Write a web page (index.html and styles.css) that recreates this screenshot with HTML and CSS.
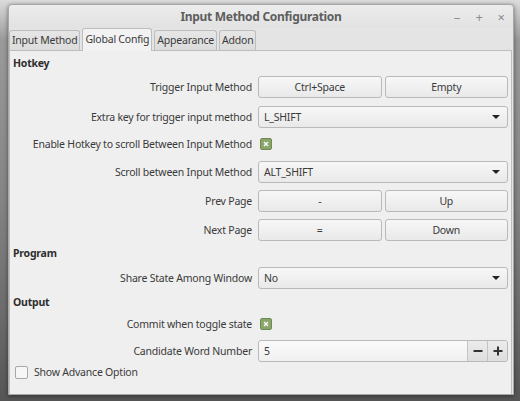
FILE: index.html
```html
<!DOCTYPE html>
<html>
<head>
<meta charset="utf-8">
<link rel="stylesheet" href="styles.css">
</head>
<body>
<div class="desk">
  <div class="window">
    <div class="titlebar">
      <div class="title">Input Method Configuration</div>
      <div class="wbtns">
        <span class="wb">&#8211;</span>
        <span class="wb">+</span>
        <span class="wb">&#215;</span>
      </div>
    </div>
    <div class="tabs">
      <div class="tab">Input Method</div>
      <div class="tab active">Global Config</div>
      <div class="tab">Appearance</div>
      <div class="tab">Addon</div>
    </div>
    <div class="panel">
      <div class="sect s-first">Hotkey</div>
      <div class="row r1">
        <div class="lbl">Trigger Input Method</div>
        <div class="ctl pair"><div class="btn">Ctrl+Space</div><div class="btn">Empty</div></div>
      </div>
      <div class="row r2">
        <div class="lbl">Extra key for trigger input method</div>
        <div class="ctl"><div class="combo"><span>L_SHIFT</span><span class="arrow"></span></div></div>
      </div>
      <div class="row chk r3">
        <div class="lbl">Enable Hotkey to scroll Between Input Method</div>
        <div class="ctl"><span class="cb on"><svg viewBox="0 0 6 6" width="6" height="6"><path d="M1 1L5 5M5 1L1 5" stroke="#fff" stroke-width="1.3"/></svg></span></div>
      </div>
      <div class="row r4">
        <div class="lbl">Scroll between Input Method</div>
        <div class="ctl"><div class="combo"><span>ALT_SHIFT</span><span class="arrow"></span></div></div>
      </div>
      <div class="row r5">
        <div class="lbl">Prev Page</div>
        <div class="ctl pair"><div class="btn">-</div><div class="btn">Up</div></div>
      </div>
      <div class="row r6">
        <div class="lbl">Next Page</div>
        <div class="ctl pair"><div class="btn">=</div><div class="btn">Down</div></div>
      </div>
      <div class="sect s-prog">Program</div>
      <div class="row r7">
        <div class="lbl">Share State Among Window</div>
        <div class="ctl"><div class="combo"><span>No</span><span class="arrow"></span></div></div>
      </div>
      <div class="sect s-out">Output</div>
      <div class="row chk r8">
        <div class="lbl">Commit when toggle state</div>
        <div class="ctl"><span class="cb on"><svg viewBox="0 0 6 6" width="6" height="6"><path d="M1 1L5 5M5 1L1 5" stroke="#fff" stroke-width="1.3"/></svg></span></div>
      </div>
      <div class="row r9">
        <div class="lbl">Candidate Word Number</div>
        <div class="ctl">
          <div class="spin">
            <span class="val">5</span>
            <span class="sb"><svg viewBox="0 0 10 10" width="10" height="10"><path d="M0.5 5H9.5" stroke="#333" stroke-width="2"/></svg></span>
            <span class="sb"><svg viewBox="0 0 10 10" width="10" height="10"><path d="M0.5 5H9.5M5 0.5V9.5" stroke="#333" stroke-width="2"/></svg></span>
          </div>
        </div>
      </div>
      <div class="adv">
        <span class="cb off"></span>
        <span>Show Advance Option</span>
      </div>
    </div>
  </div>
</div>
</body>
</html>
```
FILE: styles.css
```css
html, body {
  margin: 0;
  padding: 0;
}
body {
  width: 520px;
  height: 401px;
  overflow: hidden;
  background: linear-gradient(180deg, #dcdcdc 0px, #9a9a9a 40px, #848484 200px, #6a6a6a 320px, #555 401px);
  font-family: "Noto Sans", "DejaVu Sans", sans-serif;
  font-size: 10.5px;
  letter-spacing: -0.22px;
  color: #3a3a3a;
}
.desk {
  padding: 4px 6px 6px 8px;
}
.window {
  width: 504px;
  height: 389px;
  border: 1px solid #a8a8a8;
  border-radius: 4px 4px 0 0;
  background: #e4e4e4;
  box-shadow: 0 1px 4px rgba(0,0,0,0.45);
  display: flex;
  flex-direction: column;
}
.titlebar {
  height: 23px;
  display: flex;
  align-items: center;
  justify-content: center;
  position: relative;
  background: linear-gradient(#ececec, #e2e2e2);
  border-radius: 4px 4px 0 0;
}
.title {
  font-weight: bold;
  font-size: 12px;
  letter-spacing: -0.3px;
  color: #5e5e5e;
}
.wbtns {
  position: absolute;
  right: 5px;
  top: 3px;
  display: flex;
  gap: 8px;
  color: #8c8c8c;
  font-size: 13px;
}
.wb {
  width: 14px;
  text-align: center;
}
.tabs {
  display: flex;
  align-items: flex-end;
  height: 22px;
  gap: 2px;
}
.tab {
  height: 19px;
  line-height: 19px;
  padding: 0 2px;
  border: 1px solid #bdbdbd;
  border-bottom: none;
  border-radius: 3px 3px 0 0;
  background: linear-gradient(#e6e6e6, #dcdcdc);
  color: #3a3a3a;
}
.tab.active {
  height: 22px;
  line-height: 20px;
  background: #f2f2f2;
  margin-bottom: -1px;
  position: relative;
  z-index: 1;
}
.panel {
  flex: 1;
  border: 1px solid #bdbdbd;
  border-bottom: none;
  margin-right: 1px;
  background: #efefef;
  padding: 0 3px;
  display: flex;
  flex-direction: column;
}
.sect {
  height: 18px;
  line-height: 18px;
  font-weight: bold;
  color: #2e2e2e;
}
.s-first { margin-top: 3px; }
.s-prog { margin-top: 3px; }
.s-out { margin-top: 4px; }
.row {
  display: grid;
  grid-template-columns: 239px 250px;
  column-gap: 6px;
  align-items: center;
  height: 22px;
}
.row.chk { height: 18px; }
.lbl {
  text-align: right;
  white-space: nowrap;
}
.r1 { margin-top: 4px; }
.r2 { margin-top: 8px; }
.r3 { margin-top: 7px; }
.r4 { margin-top: 8px; }
.r5 { margin-top: 7px; }
.r6 { margin-top: 7px; }
.r7 { margin-top: 5px; }
.r8 { margin-top: 4px; }
.r9 { margin-top: 7px; }
.ctl { height: 100%; display: flex; align-items: center; }
.pair {
  display: grid;
  grid-template-columns: 1fr 1fr;
  gap: 3px;
}
.btn, .combo, .spin {
  height: 20px;
  border: 1px solid #b9b9b9;
  border-radius: 3px;
  background: linear-gradient(#f7f7f7, #e9e9e9);
  box-sizing: content-box;
}
.btn {
  display: flex;
  align-items: center;
  justify-content: center;
}
.combo {
  width: 248px;
  display: flex;
  align-items: center;
  justify-content: space-between;
}
.combo span:first-child { padding-left: 5px; }
.arrow {
  width: 0;
  height: 0;
  border-left: 4px solid transparent;
  border-right: 4px solid transparent;
  border-top: 4px solid #222;
  margin-right: 7px;
}
.cb {
  width: 10px;
  height: 10px;
  border-radius: 2px;
  display: inline-flex;
  align-items: center;
  justify-content: center;
  margin-left: 2px;
}
.cb.on {
  background: #8aa66a;
  border: 1px solid #6f8a55;
}
.cb.off {
  width: 11px;
  height: 11px;
  background: #f6f6f6;
  border: 1px solid #a8a8a8;
}
.spin {
  width: 248px;
  display: flex;
  align-items: stretch;
  background: linear-gradient(#fafafa, #f0f0f0);
}
.val {
  flex: 1;
  display: flex;
  align-items: center;
  padding-left: 5px;
}
.sb {
  width: 19px;
  display: flex;
  align-items: center;
  justify-content: center;
  border-left: 1px solid #c4c4c4;
  background: linear-gradient(#ececec, #dedede);
}
.sb:last-child { border-radius: 0 3px 3px 0; }
.adv {
  margin-top: 1px;
  height: 18px;
  display: flex;
  align-items: center;
  gap: 6px;
  padding-left: 2px;
}
.adv .cb { margin-left: 0; }
```
